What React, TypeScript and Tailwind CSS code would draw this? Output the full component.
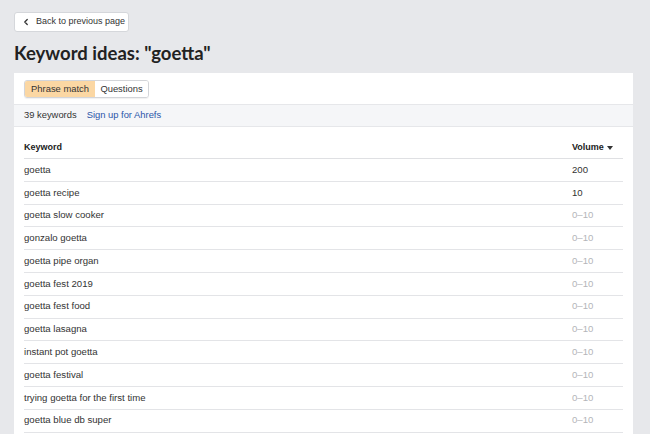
import { ChevronLeft } from "lucide-react";

const rows = [
  { keyword: "goetta", volume: "200" },
  { keyword: "goetta recipe", volume: "10" },
  { keyword: "goetta slow cooker", volume: "0–10" },
  { keyword: "gonzalo goetta", volume: "0–10" },
  { keyword: "goetta pipe organ", volume: "0–10" },
  { keyword: "goetta fest 2019", volume: "0–10" },
  { keyword: "goetta fest food", volume: "0–10" },
  { keyword: "goetta lasagna", volume: "0–10" },
  { keyword: "instant pot goetta", volume: "0–10" },
  { keyword: "goetta festival", volume: "0–10" },
  { keyword: "trying goetta for the first time", volume: "0–10" },
  { keyword: "goetta blue db super", volume: "0–10" },
];

const App = () => {
  return (
    <div className="h-[434px] overflow-hidden bg-[#e7e8eb] px-[14px] pt-3 font-['Liberation_Sans',Arial,sans-serif] text-[#333]">
      {/* Back button */}
      <button className="flex h-[20px] items-center gap-[5px] whitespace-nowrap rounded-[3px] border border-[#d5d7db] bg-white pl-[6px] pr-[3px] text-[9px] text-[#333]">
        <ChevronLeft className="h-[10px] w-[10px]" strokeWidth={3} />
        Back to previous page
      </button>

      <h1 className="mt-[10px] font-['Lato',sans-serif] text-[18.5px] font-bold leading-[22px] text-[#222]">
        Keyword ideas: "goetta"
      </h1>

      {/* Card */}
      <div className="mt-[9px] w-[619px] bg-white pb-6">
        <div className="flex px-[10px] pt-[7px] pb-[6px]">
          <div className="flex h-[18px] overflow-hidden rounded-[3px] border border-[#d3d5d9] text-[9.4px] shadow-[0_1px_1px_rgba(0,0,0,0.06)]">
            <span className="flex w-[70px] items-center justify-center bg-[#fbd7a3]">Phrase match</span>
            <span className="flex w-[53px] items-center justify-center bg-white">Questions</span>
          </div>
        </div>

        <div className="flex h-[23px] items-center gap-[10px] border-y border-[#e6e7ea] bg-[#f5f6f8] px-[10px] text-[9.4px]">
          <span>39 keywords</span>
          <a className="text-[#2a55a8]">Sign up for Ahrefs</a>
        </div>

        <div className="px-[10px]">
          <div className="flex h-[32px] items-end border-b border-[#dfe0e3] pb-[4px] text-[9px] font-bold text-[#222]">
            <span className="flex-1">Keyword</span>
            <span className="flex w-[51px] items-center gap-[3px]">
              Volume
              <svg width="6" height="4" viewBox="0 0 6 4" className="mt-px">
                <path d="M0 0h6L3 4z" fill="#333" />
              </svg>
            </span>
          </div>
          {rows.map((r) => (
            <div
              key={r.keyword}
              className="flex h-[22.8px] items-center border-b border-[#e3e4e7] text-[9.6px]"
            >
              <span className="flex-1">{r.keyword}</span>
              <span
                className={`w-[51px] ${
                  r.volume === "0–10" ? "text-[#b3b5b9]" : "text-[#333]"
                }`}
              >
                {r.volume}
              </span>
            </div>
          ))}
        </div>
      </div>
    </div>
  );
};

export default App;
